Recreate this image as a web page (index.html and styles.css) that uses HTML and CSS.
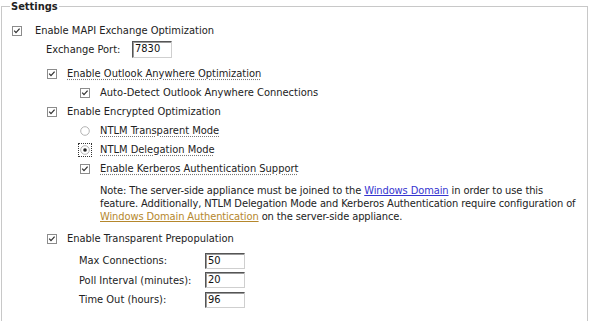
FILE: index.html
```html
<!DOCTYPE html>
<html>
<head>
<meta charset="utf-8">
<title>Settings</title>
<link rel="stylesheet" href="styles.css">
</head>
<body>
<fieldset class="settings">
  <legend class="legend">Settings</legend>

  <div class="row lvl1">
    <span class="cb"><svg width="10" height="10" viewBox="0 0 10 10"><rect x="0.5" y="0.5" width="9" height="9" fill="#fff" stroke="#8c8c8c"/><polyline points="2.2,4.6 4,6.6 7.6,2.6" fill="none" stroke="#333" stroke-width="1.3"/></svg></span>
    <span class="lbl gap1">Enable MAPI Exchange Optimization</span>
  </div>

  <div class="row field port-row">
    <span class="flabel port-label">Exchange Port:</span>
    <span class="input port-input">7830</span>
  </div>

  <div class="row lvl2 after-port">
    <span class="cb"><svg width="10" height="10" viewBox="0 0 10 10"><rect x="0.5" y="0.5" width="9" height="9" fill="#fff" stroke="#8c8c8c"/><polyline points="2.2,4.6 4,6.6 7.6,2.6" fill="none" stroke="#333" stroke-width="1.3"/></svg></span>
    <span class="lbl gap dotted">Enable Outlook Anywhere Optimization</span>
  </div>

  <div class="row lvl3">
    <span class="cb"><svg width="10" height="10" viewBox="0 0 10 10"><rect x="0.5" y="0.5" width="9" height="9" fill="#fff" stroke="#8c8c8c"/><polyline points="2.2,4.6 4,6.6 7.6,2.6" fill="none" stroke="#333" stroke-width="1.3"/></svg></span>
    <span class="lbl gap">Auto-Detect Outlook Anywhere Connections</span>
  </div>

  <div class="row lvl2">
    <span class="cb"><svg width="10" height="10" viewBox="0 0 10 10"><rect x="0.5" y="0.5" width="9" height="9" fill="#fff" stroke="#8c8c8c"/><polyline points="2.2,4.6 4,6.6 7.6,2.6" fill="none" stroke="#333" stroke-width="1.3"/></svg></span>
    <span class="lbl gap">Enable Encrypted Optimization</span>
  </div>

  <div class="row lvl3">
    <span class="radio"><svg width="10" height="10" viewBox="0 0 10 10"><circle cx="5" cy="5" r="4.3" fill="#fff" stroke="#b4b4b4"/></svg></span>
    <span class="lbl gap dotted">NTLM Transparent Mode</span>
  </div>

  <div class="row lvl3">
    <span class="radio focus"><svg width="10" height="10" viewBox="0 0 10 10"><circle cx="5" cy="5" r="4.3" fill="#fff" stroke="#b4b4b4"/><circle cx="5" cy="5" r="1.8" fill="#222"/></svg></span>
    <span class="lbl gap dotted">NTLM Delegation Mode</span>
  </div>

  <div class="row lvl3">
    <span class="cb"><svg width="10" height="10" viewBox="0 0 10 10"><rect x="0.5" y="0.5" width="9" height="9" fill="#fff" stroke="#8c8c8c"/><polyline points="2.2,4.6 4,6.6 7.6,2.6" fill="none" stroke="#333" stroke-width="1.3"/></svg></span>
    <span class="lbl gap dotted">Enable Kerberos Authentication Support</span>
  </div>

  <p class="note">Note: The server-side appliance must be joined to the <a class="link-blue" href="#">Windows Domain</a> in order to use this<br>feature. Additionally, NTLM Delegation Mode and Kerberos Authentication require configuration of<br><a class="link-gold" href="#">Windows Domain Authentication</a> on the server-side appliance.</p>

  <div class="row lvl2 after-note">
    <span class="cb"><svg width="10" height="10" viewBox="0 0 10 10"><rect x="0.5" y="0.5" width="9" height="9" fill="#fff" stroke="#8c8c8c"/><polyline points="2.2,4.6 4,6.6 7.6,2.6" fill="none" stroke="#333" stroke-width="1.3"/></svg></span>
    <span class="lbl gap">Enable Transparent Prepopulation</span>
  </div>

  <div class="pre-group">
    <div class="row field pre-row">
      <span class="flabel pre-label">Max Connections:</span>
      <span class="input pre-input">50</span>
    </div>
    <div class="row field pre-row">
      <span class="flabel pre-label">Poll Interval (minutes):</span>
      <span class="input pre-input">20</span>
    </div>
    <div class="row field pre-row">
      <span class="flabel pre-label">Time Out (hours):</span>
      <span class="input pre-input">96</span>
    </div>
  </div>
</fieldset>
</body>
</html>
```

FILE: styles.css
```css
html, body {
  margin: 0;
  padding: 0;
  background: #fff;
}

body {
  font-family: "DejaVu Sans Condensed", "DejaVu Sans", sans-serif;
  font-stretch: condensed;
  font-size: 11px;
  color: #222;
}

.settings {
  margin: 0 1px;
  padding: 8px 10px 13px 10px;
  border: 1px solid #c8c8c8;
  min-width: 0;
}

.legend {
  font-weight: bold;
  padding: 0 1px;
  margin-left: -2px;
  line-height: 13px;
  color: #222;
}

.row {
  display: flex;
  align-items: center;
  height: 19px;
  white-space: nowrap;
}

.cb, .radio {
  display: inline-flex;
  width: 10px;
  height: 10px;
  flex: none;
}

.cb svg, .radio svg {
  display: block;
}

.radio.focus {
  outline: 1px dotted #333;
  outline-offset: 1px;
}

.lvl1 { padding-left: 0; }
.lvl2 { padding-left: 35px; }
.lvl3 { padding-left: 68px; }

.gap1 { margin-left: 13px; }
.gap { margin-left: 10px; }

.dotted {
  text-decoration: underline dotted #777;
  text-underline-offset: 2px;
}

.port-row { padding-left: 34px; }
.port-label { width: 86px; }
.after-port { margin-top: 5px; }

.input {
  display: inline-block;
  box-sizing: border-box;
  height: 17px;
  line-height: 14px;
  padding: 0 2px;
  border: 1px solid;
  border-color: #555 #cfcfcf #cfcfcf #555;
  box-shadow: inset 1px 1px 0 #9a9a9a;
  background: #fff;
  color: #111;
}

.port-input { width: 40px; }

.note {
  margin: 6px 0 0 0;
  padding-left: 88px;
  line-height: 13px;
  letter-spacing: -0.1px;
  white-space: nowrap;
}

.link-blue {
  color: #3535d0;
  text-decoration: underline;
}

.link-gold {
  color: #b5872c;
  text-decoration: underline;
}

.after-note { margin-top: 6px; }

.pre-group {
  display: flex;
  flex-direction: column;
  gap: 0.5px;
  margin-top: 3px;
}

.pre-row { padding-left: 67px; }
.pre-label { width: 126px; }
.pre-input { width: 40px; height: 16px; }
```
